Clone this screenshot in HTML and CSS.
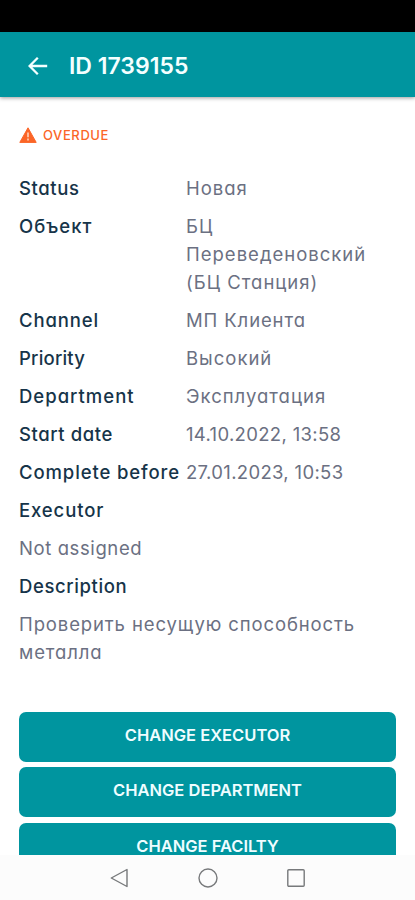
FILE: index.html
```html
<!DOCTYPE html>
<html lang="en">
<head>
<meta charset="utf-8">
<meta name="viewport" content="width=device-width, initial-scale=1">
<title>ID 1739155</title>
<link rel="stylesheet" href="styles.css">
</head>
<body>
<div class="screen">
  <div class="status-bar"></div>
  <header class="app-bar">
    <svg class="back" viewBox="0 0 20 20" aria-hidden="true"><path d="M19.2 10H2M9.8 1.8L1.6 10l8.2 8.2"/></svg>
    <h1 class="title">ID 1739155</h1>
  </header>
  <main class="content">
    <div class="alert">
      <svg class="warning" viewBox="0 0 18 16" aria-hidden="true"><path class="warning-shape" d="M9 .8L17.2 15.4H.8z"/><path class="warning-mark" d="M9 5.6v4.6M9 11.6v1.8"/></svg>
      <span class="alert-text">OVERDUE</span>
    </div>
    <dl class="details">
      <div class="row"><dt class="regular">Status</dt><dd class="wide">Новая</dd></div>
      <div class="row"><dt class="wide">Объект</dt><dd class="wide">БЦ<br>Переведеновский<br>(БЦ Станция)</dd></div>
      <div class="row"><dt>Channel</dt><dd>МП Клиента</dd></div>
      <div class="row"><dt class="tight">Priority</dt><dd class="wide">Высокий</dd></div>
      <div class="row"><dt class="wide">Department</dt><dd class="wide">Эксплуатация</dd></div>
      <div class="row"><dt class="regular">Start date</dt><dd class="date">14.10.2022, 13:58</dd></div>
      <div class="row"><dt>Complete before</dt><dd class="date">27.01.2023, 10:53</dd></div>
      <div class="row stacked"><dt>Executor</dt><dd class="regular">Not assigned</dd></div>
      <div class="row stacked"><dt class="regular">Description</dt><dd>Проверить несущую способность<br>металла</dd></div>
    </dl>
    <div class="actions">
      <button class="action">CHANGE EXECUTOR</button>
      <button class="action">CHANGE DEPARTMENT</button>
      <button class="action">CHANGE FACILTY</button>
    </div>
  </main>
  <nav class="nav-bar">
    <svg class="nav-icon" viewBox="0 0 20 20" aria-hidden="true"><path d="M17 1.5v17L1.3 10z"/></svg>
    <svg class="nav-icon" viewBox="0 0 20 20" aria-hidden="true"><circle cx="10" cy="10" r="9"/></svg>
    <svg class="nav-icon" viewBox="0 0 20 20" aria-hidden="true"><rect x="1.8" y="1.8" width="16.4" height="16.4" rx="1"/></svg>
  </nav>
</div>
</body>
</html>
```
FILE: styles.css
```css
* { box-sizing: border-box; }
body {
  margin: 0;
  background: #fff;
  font-family: Inter, "Noto Sans", sans-serif;
  font-feature-settings: "cv11";
}
.screen { display: flex; flex-direction: column; height: 900px; overflow: hidden; }
.status-bar { flex: 0 0 32px; background: #000; }
.app-bar {
  flex: 0 0 65px;
  display: flex;
  align-items: center;
  padding: 2px 0 0 28px;
  background: #00959f;
  box-shadow: 0 1px 4px rgba(0, 0, 0, .4);
  z-index: 1;
}
.back { width: 20px; height: 20px; margin-right: 21px; fill: none; stroke: #f4ffff; stroke-width: 2.3; }
.title { margin: 0; color: #f4ffff; font-size: 23px; font-weight: 600; line-height: 30px; }
.content { flex: 1 1 0; min-height: 0; overflow: hidden; padding: 28px 19px 0; }
.alert { display: flex; align-items: center; height: 20px; color: #fb6527; }
.warning { width: 18px; height: 16px; margin-right: 6px; }
.warning-shape { fill: #fb6527; stroke: #fb6527; stroke-width: 1; stroke-linejoin: round; }
.warning-mark { fill: none; stroke: #ffd9c5; stroke-width: 1.5; }
.alert-text { font-size: 13px; font-weight: 500; line-height: 20px; letter-spacing: .6px; }
.details { display: flex; flex-direction: column; gap: 10.1px; margin: 29.6px 0 0; font-size: 18.5px; line-height: 27.95px; letter-spacing: .88px; }
.row { display: grid; grid-template-columns: 167px 1fr; white-space: nowrap; }
.stacked { grid-template-columns: 1fr; row-gap: 10.1px; }
dt { color: #163449; font-weight: 500; }
dd { margin: 0; color: #6b7082; }
.tight { letter-spacing: .2px; }
.date { letter-spacing: .33px; }
.regular { letter-spacing: .6px; }
.wide { letter-spacing: 1px; }
.actions { display: flex; flex-direction: column; gap: 5.5px; margin-top: 45px; }
.action {
  flex: none;
  height: 50px;
  padding: 0 0 4px;
  border: 0;
  border-radius: 7px;
  background: #00959f;
  color: #effdff;
  font: 600 16.5px/20px Inter, sans-serif;
}
.nav-bar { flex: 0 0 45px; display: flex; justify-content: center; align-items: center; gap: 68px; background: #fcfcfc; }
.nav-icon { width: 20px; height: 20px; fill: none; stroke: #77797b; stroke-width: 1.4; stroke-linejoin: round; }
```
